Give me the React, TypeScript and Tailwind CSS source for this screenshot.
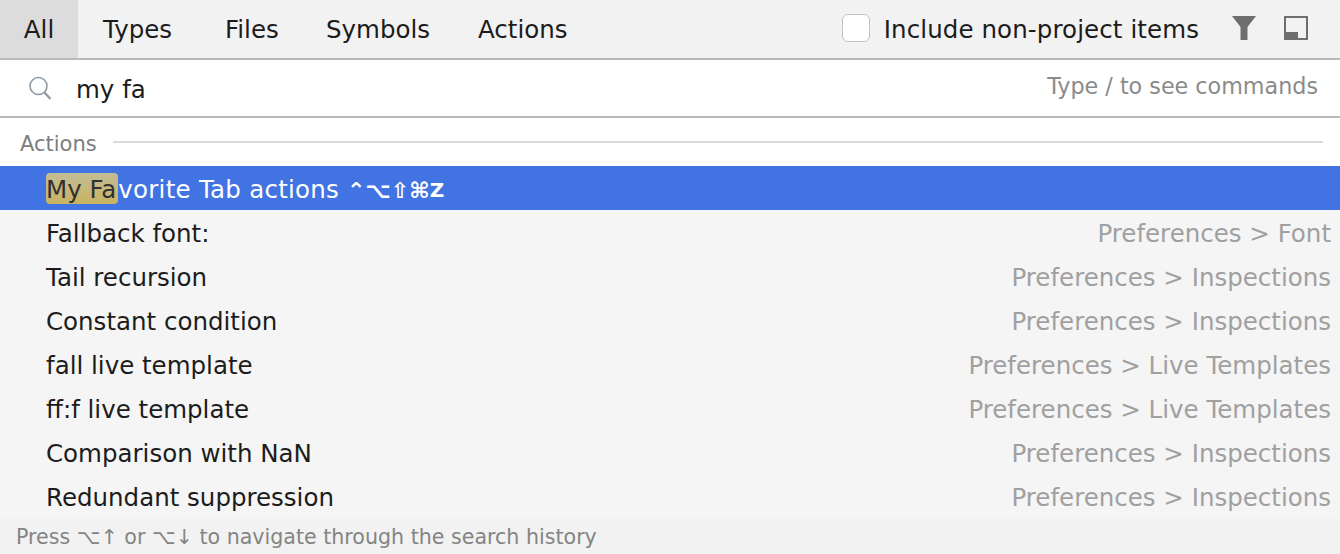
const tabs = [
  { label: "Types", w: "w-[122px]" },
  { label: "Files", w: "w-[101px]" },
  { label: "Symbols", w: "w-[152px]" },
  { label: "Actions", w: "w-[94px]" },
];

const rows = [
  { name: "Fallback font:", path: "Preferences > Font" },
  { name: "Tail recursion", path: "Preferences > Inspections" },
  { name: "Constant condition", path: "Preferences > Inspections" },
  { name: "fall live template", path: "Preferences > Live Templates" },
  { name: "ff:f live template", path: "Preferences > Live Templates" },
  { name: "Comparison with NaN", path: "Preferences > Inspections" },
  { name: "Redundant suppression", path: "Preferences > Inspections" },
];

const font = "font-['DejaVu_Sans',sans-serif]";

export default function App() {
  return (
    <div className={`flex h-[554px] w-[1340px] flex-col overflow-hidden bg-[#f5f5f5] text-[#1c1c1c] ${font}`}>
      {/* tabs */}
      <div className="flex h-[60px] shrink-0 items-stretch border-b-2 border-[#b9b9b9] bg-[#f2f2f2] text-[24.500px]">
        <div className="flex w-[78px] items-center justify-center bg-[#dcdcdc] pt-0.5">All</div>
        <div className="flex items-center pl-[25px] pt-0.5">
          {tabs.map((t) => (
            <span key={t.label} className={t.w}>
              {t.label}
            </span>
          ))}
        </div>
        <div className="ml-auto flex items-center pr-[32px]">
          <div className="mb-0.5 h-7 w-7 rounded-[6px] border border-[#c4c4c4] bg-white" />
          <span className="ml-[14px] pt-0.5 tracking-[0.1px]">Include non-project items</span>
          <svg className="mb-0.5 ml-[33px]" width={24} height={24} viewBox="0 0 24 24">
            <path d="M0 0h24L15.500 11v13h-7V11z" fill="#6e6e6e" />
          </svg>
          <svg className="mb-0.5 ml-[28px]" width={24} height={24} viewBox="0 0 24 24">
            <path d="M0 0h24v24H0z M2 2v20h20V2z" fill="#6e6e6e" fillRule="evenodd" />
            <path d="M2 16h12v6H2z" fill="#6e6e6e" />
          </svg>
        </div>
      </div>

      {/* search */}
      <div className="flex h-[58px] shrink-0 items-center border-b-2 border-[#b9b9b9] bg-white pl-[28px] pr-[22px]">
        <svg width={24} height={26} viewBox="0 0 24 26" fill="none" stroke="#8f9ba4" strokeWidth={2}>
          <circle cx="10.500" cy="11" r="8.500" strokeWidth={1.600} />
          <path d="M16.500 17.500l6 6.500" strokeWidth={2.400} />
        </svg>
        <span className="ml-[24px] pt-1 text-[24.500px] text-[#1c1c1c]">my fa</span>
        <span className="ml-auto pb-0.5 text-[22.250px] text-[#8b8b8b]">Type / to see commands</span>
      </div>

      {/* group header */}
      <div className="flex h-[48px] shrink-0 items-center bg-white pl-[20px] pr-[17px]">
        <span className="pt-1.5 text-[21px] text-[#7d7d7d]">Actions</span>
        <div className="ml-[16px] h-0.5 flex-1 bg-[#dadada]" />
      </div>

      {/* selected row */}
      <div className="flex h-[44px] shrink-0 items-center bg-[#4273e3] pl-[46px] text-[24.500px] text-white">
        <span className="inline-flex h-[31px] items-center rounded-[4px] bg-gradient-to-b from-[#c3bd96] to-[#c9b25f] pr-0.5 pt-1 text-[#303030]">
          My Fa
        </span>
        <span className="pt-1 tracking-[0.25px]">vorite Tab actions</span>
        <span className="ml-2 pt-1 text-[22px] font-bold">⌃⌥⇧⌘</span>
        <span className="pt-1 text-[20px] font-bold">Z</span>
      </div>

      {/* rows */}
      <div className="flex flex-1 flex-col">
        {rows.map((r) => (
          <div key={r.name} className="flex h-[44px] shrink-0 items-center justify-between pl-[46px] pr-[9px] pt-1 text-[24.500px]">
            <span>{r.name}</span>
            <span className="text-[#a0a0a0]">{r.path}</span>
          </div>
        ))}
      </div>

      {/* footer */}
      <div className="flex h-[36px] shrink-0 items-center bg-[#f2f2f2] pl-[16px] pt-0.5 text-[20.600px] text-[#848484]">
        Press ⌥↑ or ⌥↓ to navigate through the search history
      </div>
    </div>
  );
}
